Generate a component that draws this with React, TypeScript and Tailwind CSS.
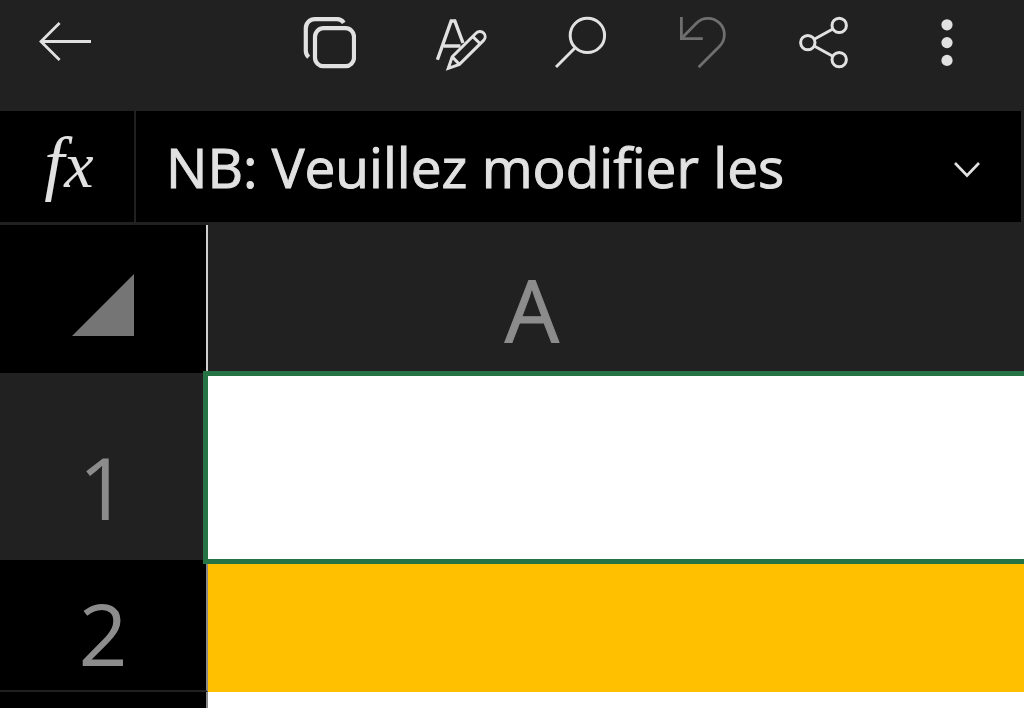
import { useState } from "react";

const stroke = { fill: "none", stroke: "currentColor" };

function BackIcon() {
  return (
    <svg width="54" height="54" viewBox="0 0 54 54" {...stroke} strokeWidth="2.8" aria-hidden="true">
      <path d="M53 26.5H3M21.6 8.1 3 26.5l18.6 18.6" />
    </svg>
  );
}

function CopyIcon() {
  return (
    <svg width="56" height="54" viewBox="-2 0 56 54" {...stroke} strokeWidth="4.2" aria-hidden="true">
      <path d="M6.6 42.2C4.9 40.6 3.8 38.6 3.8 35.8V13.2a9 9 0 0 1 9-9h22.4a8 8 0 0 1 6.6 3.6" />
      <rect x="13" y="13.2" width="39" height="38" rx="8.5" />
    </svg>
  );
}

// Extra room on the left keeps the pencil clear of the copy icon.
function FormatIcon() {
  return (
    <svg width="64" height="56" viewBox="-10 0 64 56" {...stroke} strokeWidth="3" aria-hidden="true">
      <path d="M3.4 44.8 17.2 6h3.6l8.2 22M9.8 31h16.6" strokeWidth="3.4" />
      <path d="m14.2 53.4 4-11.6L42.2 18a5.2 5.2 0 0 1 7.4 7.4L25.4 49.4zM18.2 41.8l7.2 7.6M38.6 21.4l7.6 7.4" />
    </svg>
  );
}

function SearchIcon() {
  return (
    <svg width="54" height="54" viewBox="0 0 54 54" {...stroke} strokeWidth="3" aria-hidden="true">
      <circle cx="32.4" cy="20.4" r="17.2" />
      <path d="M20.2 32.8 1 52" />
    </svg>
  );
}

function UndoIcon() {
  return (
    <svg width="54" height="54" viewBox="0 0 54 54" {...stroke} strokeWidth="2.8" aria-hidden="true">
      <path d="M4.4 2v21.6h21.4" />
      <path d="M4.4 23.6 19.4 8.2a16.3 16.3 0 0 1 23.2 23L21.6 52.2" />
    </svg>
  );
}

function ShareIcon() {
  return (
    <svg width="54" height="54" viewBox="0 0 54 54" {...stroke} strokeWidth="3" aria-hidden="true">
      <circle cx="9.8" cy="27.6" r="7.2" />
      <circle cx="41.2" cy="10.4" r="7.2" />
      <circle cx="41.2" cy="44.6" r="7.2" />
      <path d="m16.2 24.2 18.6-10.2M16.2 31l18.6 10.2" />
    </svg>
  );
}

function MoreIcon() {
  return (
    <svg width="54" height="54" viewBox="0 0 54 54" fill="currentColor" aria-hidden="true">
      <circle cx="27" cy="9.8" r="5.6" />
      <circle cx="27" cy="27.6" r="5.6" />
      <circle cx="27" cy="45.4" r="5.6" />
    </svg>
  );
}

const ACTIONS = [
  { label: "Copier", icon: CopyIcon, disabled: false },
  { label: "Mise en forme", icon: FormatIcon, disabled: false },
  { label: "Rechercher", icon: SearchIcon, disabled: false },
  { label: "Annuler", icon: UndoIcon, disabled: true },
  { label: "Partager", icon: ShareIcon, disabled: false },
  { label: "Plus", icon: MoreIcon, disabled: false },
];

const ROWS = [
  { id: 1, label: "1", height: "h-[187px]", head: "bg-[#212121] pt-10", cell: "bg-white" },
  { id: 2, label: "2", height: "h-[132px]", head: "border-b-2 border-b-[#212121] bg-black pt-4", cell: "bg-[#ffc000]" },
  { id: 3, label: "", height: "h-32", head: "bg-black", cell: "bg-white" },
];

export default function App() {
  const [formula, setFormula] = useState("NB: Veuillez modifier les");
  const [selected, setSelected] = useState(1);

  return (
    <div className="flex h-screen flex-col overflow-hidden bg-[#212121] font-['Open_Sans',sans-serif]">
      <header className="flex h-[111px] shrink-0 items-start justify-between pt-[15px] pr-[50px] pl-[38px] text-[#e1e1e1]">
        <button type="button" aria-label="Retour">
          <BackIcon />
        </button>
        <div className="flex w-[72%] items-start justify-between">
          {ACTIONS.map(({ label, icon: Icon, disabled }) => (
            <button
              key={label}
              type="button"
              aria-label={label}
              disabled={disabled}
              className="disabled:text-[#6f6f6f]"
            >
              <Icon />
            </button>
          ))}
        </div>
      </header>

      <div className="mr-[3px] mb-[3px] flex h-[111px] shrink-0 bg-black text-[#e1e1e1]">
        <label
          htmlFor="formula"
          className="w-[136px] shrink-0 border-r-2 border-[#212121] pt-4 pl-1 text-center font-['Liberation_Serif','Times_New_Roman',serif] text-[72px] leading-[72px] italic"
        >
          f<span className="text-[66px]">x</span>
        </label>
        <input
          id="formula"
          type="text"
          value={formula}
          onChange={(e) => setFormula(e.target.value)}
          className="min-w-0 flex-1 bg-transparent pt-0.5 pl-[30px] text-[55px] outline-none [-webkit-text-stroke:1px_#e1e1e1]"
        />
        <button type="button" aria-label="Développer" className="flex w-[108px] items-center justify-center pt-0.5">
          <svg width="28" height="28" viewBox="0 0 28 28" {...stroke} strokeWidth="2.6" aria-hidden="true">
            <path d="m2 9 12 12.5L26 9" />
          </svg>
        </button>
      </div>

      <table className="w-full table-fixed border-separate border-spacing-0 text-[86px] leading-none text-[#8c8c8c]">
        <thead>
          <tr className="h-[148px]">
            <th className="w-52 border-r-2 border-[#d0d0d0] bg-black p-0">
              <button type="button" aria-label="Tout sélectionner" className="block w-full pt-3">
                <svg width="62" height="62" viewBox="0 0 62 62" className="mx-auto" aria-hidden="true">
                  <path d="M62 0v62H0z" fill="#757575" />
                </svg>
              </button>
            </th>
            <th scope="col" className="bg-[#212121] p-0 pt-[22px] pr-42 font-normal [-webkit-text-stroke:1px_#8c8c8c]">
              A
            </th>
          </tr>
        </thead>
        <tbody>
          {ROWS.map((row) => (
            <tr key={row.id} className={row.height}>
              <th scope="row" className={`border-r-2 border-r-[#8a8a8a] p-0 font-normal ${row.head}`}>
                {row.label}
              </th>
              <td className={`relative p-0 ${row.cell}`} onClick={() => setSelected(row.id)}>
                {selected === row.id && (
                  <div className="absolute -top-[2px] -right-2 -bottom-1 -left-[5px] z-10 border-[5px] border-[#267346]" />
                )}
              </td>
            </tr>
          ))}
        </tbody>
      </table>
    </div>
  );
}
